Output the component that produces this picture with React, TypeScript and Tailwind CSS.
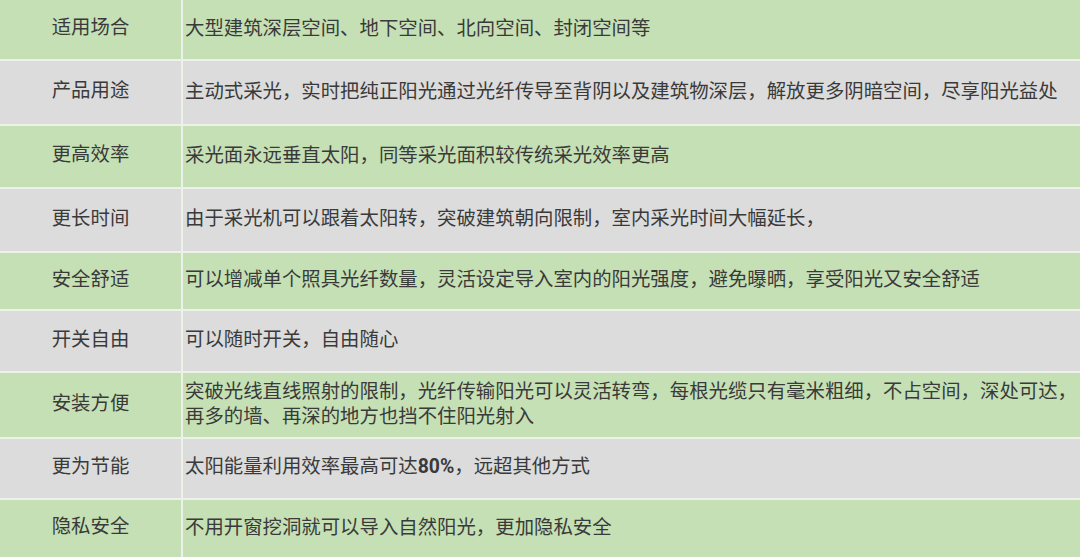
const rows: { label: string; h: string; content: React.ReactNode; green: boolean }[] = [
  { label: "适用场合", h: "h-[59px]", green: true, content: "大型建筑深层空间、地下空间、北向空间、封闭空间等" },
  {
    label: "产品用途",
    h: "h-[65px]",
    green: false,
    content: "主动式采光，实时把纯正阳光通过光纤传导至背阴以及建筑物深层，解放更多阴暗空间，尽享阳光益处",
  },
  { label: "更高效率", h: "h-[63px]", green: true, content: "采光面永远垂直太阳，同等采光面积较传统采光效率更高" },
  { label: "更长时间", h: "h-[64px]", green: false, content: "由于采光机可以跟着太阳转，突破建筑朝向限制，室内采光时间大幅延长，" },
  {
    label: "安全舒适",
    h: "h-[58px]",
    green: true,
    content: "可以增减单个照具光纤数量，灵活设定导入室内的阳光强度，避免曝晒，享受阳光又安全舒适",
  },
  { label: "开关自由", h: "h-[62px]", green: false, content: "可以随时开关，自由随心" },
  {
    label: "安装方便",
    h: "h-[66px]",
    green: true,
    content: (
      <>
        突破光线直线照射的限制，光纤传输阳光可以灵活转弯，每根光缆只有毫米粗细，不占空间，深处可达，
        <br />
        再多的墙、再深的地方也挡不住阳光射入
      </>
    ),
  },
  {
    label: "更为节能",
    h: "h-[61px]",
    green: false,
    content: (
      <>
        太阳能量利用效率最高可达
        <span className="font-bold font-['Roboto','Liberation_Sans',sans-serif]">80%</span>，远超其他方式
      </>
    ),
  },
  { label: "隐私安全", h: "h-[59px]", green: true, content: "不用开窗挖洞就可以导入自然阳光，更加隐私安全" },
];

export default function App() {
  return (
    <div className="w-[1080px] h-[557px] overflow-hidden bg-white font-['Noto_Sans_CJK_SC',sans-serif] text-[19.4px] text-[#3a3a3a]">
      {rows.map((r, i) => (
        <div
          key={r.label}
          className={`flex ${r.h} ${i > 0 ? "border-t-2 border-[#eef1ea]" : ""} ${
            r.green ? "bg-[#c5e0b4]" : "bg-[#dcdcdc]"
          }`}
        >
          <div className="w-[183px] shrink-0 flex items-center justify-center pb-[7px] border-r-2 border-[#eef1ea]">
            {r.label}
          </div>
          <div className="flex-1 flex items-center pl-[2px] pb-[7px] whitespace-nowrap leading-[25px] overflow-hidden">
            <div>{r.content}</div>
          </div>
        </div>
      ))}
    </div>
  );
}
